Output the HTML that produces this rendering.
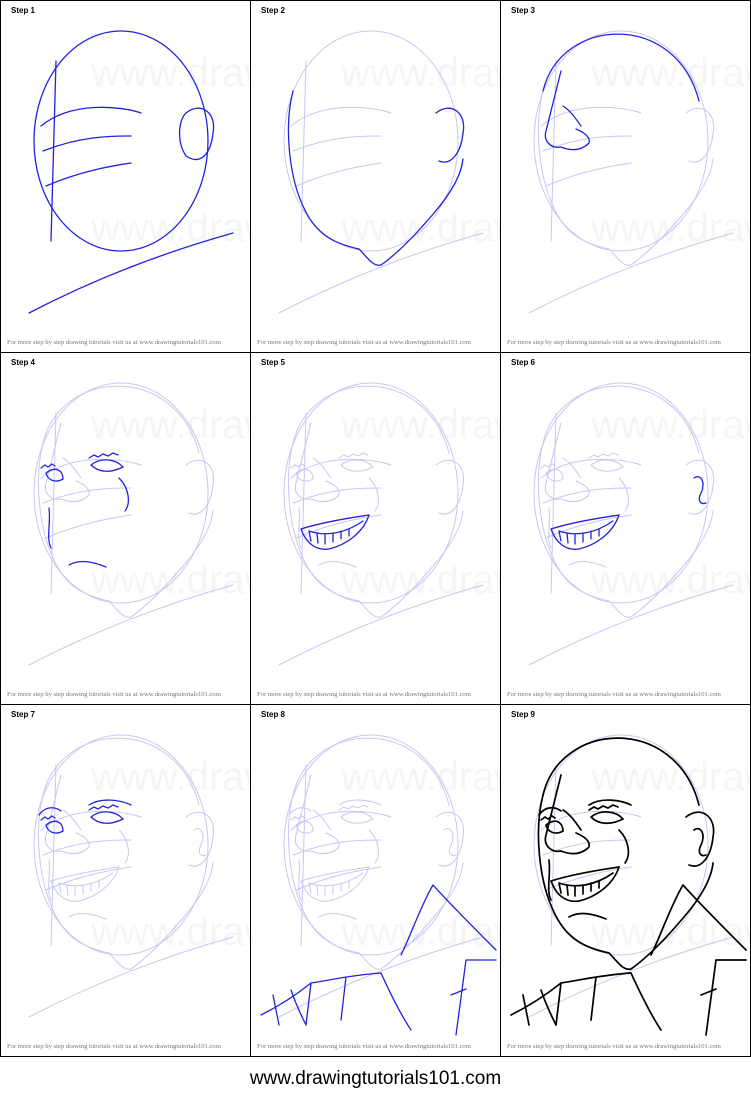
<!DOCTYPE html>
<html><head><meta charset="utf-8"><style>
body{margin:0;width:751px;height:1107px;background:#fff;position:relative;overflow:hidden;font-family:"Liberation Sans",sans-serif}
.p{position:absolute;width:249px;height:351px;border:1px solid #000;box-sizing:content-box;overflow:hidden}
.lab{position:absolute;left:10px;top:5px;font-size:8px;font-weight:bold;color:#000}
.ft{position:absolute;left:6px;top:338px;font-family:"Liberation Serif",serif;font-size:6.6px;color:#777;white-space:nowrap}
.wm{position:absolute;left:90px;font-size:40px;color:#f5f5f5;white-space:nowrap}
svg{position:absolute;left:0;top:0}
.bot{position:absolute;left:0;width:751px;top:1068px;text-align:center;font-size:19px;color:#000}
</style></head><body>
<div id="g"></div>
<div class="bot">www.drawingtutorials101.com</div>
<script>
var G='#c7c7f3',B='#2222dd',K='#000';
var head='M42,90 C60,15 175,10 198,100';
var face='M42,90 C33,125 38,175 52,205 C65,235 85,243 108,248 C116,256 122,266 130,264 C150,250 172,225 183,212 C195,198 210,178 212,158';
var ear='M185,112 C200,100 216,112 212,132 C210,152 200,165 188,160';
var neck='M28,312 C80,285 150,255 232,232';
var nose='M60,70 C55,90 50,110 45,130 C42,140 50,148 60,146 C70,150 80,150 88,142 C90,135 80,130 75,128 M62,105 C70,110 75,118 80,125';
var eyes='M45,120 C55,112 62,118 62,126 C55,130 47,128 45,120 M90,112 C100,104 115,106 122,114 C110,120 98,120 90,112 M40,115 l4,-3 l3,2 l4,-3 l3,2 M88,105 l5,-3 l4,2 l5,-3 l5,2 l5,-3 l5,2';
var brow='M38,110 C45,100 55,102 60,106 M88,100 C100,92 120,95 130,100';
var cheek='M48,155 C50,170 45,185 50,195 M118,125 C128,135 130,150 124,158 M68,212 C80,205 95,210 105,214';
var mouth='M50,176 C75,168 105,164 118,162 C112,180 95,192 78,196 C65,198 55,190 50,176 M58,178 C75,184 95,180 112,168 M58,178 l2,10 M66,180 l1,10 M74,181 l0,10 M82,180 l0,9 M90,178 l0,8 M98,176 l0,7';
var earin='M193,125 C200,120 205,130 200,140 C196,148 200,152 205,150';
var suit='M10,310 C30,300 45,290 60,278 M60,278 L55,320 M60,278 C80,275 100,270 130,268 M95,272 L90,315 M130,268 C140,290 150,310 160,325 M150,250 C160,230 170,200 182,180 M182,180 C200,200 220,220 245,245 M215,255 L205,330 M215,255 L245,255 M22,290 L28,320 M40,285 C45,300 50,310 55,320 M200,290 l15,-6';
var guides1='M55,60 L50,240 M40,125 C70,100 120,105 140,112 M42,150 C80,135 110,135 130,135 M45,185 C80,170 110,165 130,162';
var steps=[
 [[ 'E', B],[guides1,B],['M185,112 C200,100 216,112 212,132 C210,152 200,165 185,155 C175,140 178,118 185,112',B],[neck,B]],
 [[ 'E',G],[guides1,G],[neck,G],[face,B],[ear,B]],
 [['E',G],[guides1,G],[neck,G],[face,G],[ear,G],[head,B],[nose,B]],
 [['E',G],[guides1,G],[neck,G],[face,G],[ear,G],[head,G],[nose,G],[eyes,B],[cheek,B]],
 [['E',G],[guides1,G],[neck,G],[face,G],[ear,G],[head,G],[nose,G],[eyes,G],[cheek,G],[mouth,B]],
 [['E',G],[guides1,G],[neck,G],[face,G],[ear,G],[head,G],[nose,G],[eyes,G],[cheek,G],[mouth,B],[earin,B]],
 [['E',G],[guides1,G],[neck,G],[face,G],[ear,G],[head,G],[nose,G],[eyes,B],[brow,B],[cheek,G],[mouth,G],[earin,G]],
 [['E',G],[guides1,G],[neck,G],[face,G],[ear,G],[head,G],[nose,G],[eyes,G],[brow,G],[cheek,G],[mouth,G],[earin,G],[suit,B]],
 [['E',G],[guides1,G],[neck,G],[face,K],[ear,K],[head,K],[nose,K],[eyes,K],[brow,K],[cheek,K],[mouth,K],[earin,K],[suit,K]]
];
var h='';
for(var i=0;i<9;i++){
 var c=i%3,r=Math.floor(i/3);
 var x=c*250,y=r*352;
 var s='<svg width="250" height="352" viewBox="0 0 250 352">';
 steps[i].forEach(function(e){
  var w=(e[1]==G)?1:(e[1]==K?1.7:1.3);
  if(e[0]=='E') s+='<ellipse cx="120" cy="140" rx="87" ry="110" fill="none" stroke="'+e[1]+'" stroke-width="'+w+'"/>';
  else s+='<path d="'+e[0]+'" fill="none" stroke="'+e[1]+'" stroke-width="'+w+'" stroke-linecap="round"/>';
 });
 s+='</svg>';
 h+='<div class="p" style="left:'+x+'px;top:'+y+'px"><div class="wm" style="top:50px">www.drawingtutorials101.com</div><div class="wm" style="top:205px">www.drawingtutorials101.com</div>'+s+'<div class="lab">Step '+(i+1)+'</div><div class="ft">For more step by step drawing tutorials visit us at www.drawingtutorials101.com</div></div>';
}
document.getElementById('g').innerHTML=h;
</script>
</body></html>
